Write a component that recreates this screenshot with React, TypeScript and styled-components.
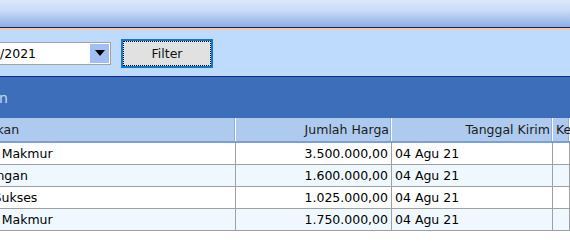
import React from 'react'
import styled, { createGlobalStyle } from 'styled-components'

// the window is scrolled to the right, so the page is drawn wider and shifted left
const SHIFT = 200
const COLUMNS = '131px 305px 156px 161px 1fr'

const GlobalStyle = createGlobalStyle`
  html, body {
    margin: 0;
    padding: 0;
    background: #fff;
  }
  body {
    font-family: "DejaVu Sans", Verdana, sans-serif;
    font-size: 12.5px;
    color: #000;
  }
`

const Viewport = styled.div`
  width: 570px;
  height: 246px;
  overflow: hidden;
  background: #fff;
`

const Page = styled.div`
  width: ${570 + SHIFT}px;
  margin-left: -${SHIFT}px;
`

const TopBar = styled.div`
  height: 27px;
  background: linear-gradient(#dce8fb 0%, #c8dbf7 40%, #8daee4 100%);
  border-bottom: 1px solid #0b2183;
`

const Toolbar = styled.div`
  height: 46px;
  display: flex;
  align-items: center;
  background: #bedbfe;
  border-top: 2px solid #fdca95;
  border-bottom: 1px solid #0b2d91;
`

const Label = styled.span`
  width: 150px;
  margin-right: 10px;
  text-align: right;
`

const Combo = styled.div`
  box-sizing: border-box;
  width: 151px;
  height: 23px;
  display: flex;
  align-items: center;
  background: #fff;
  border: 1px solid #a3a3a3;
  padding: 0 1px 0 3px;
`

const ComboText = styled.span`
  flex: 1;
  font-size: 12.5px;
`

const ComboArrow = styled.div`
  width: 19px;
  height: 19px;
  display: flex;
  align-items: center;
  justify-content: center;
  background: #a2bff4;
`

const FilterButton = styled.button`
  box-sizing: border-box;
  width: 92px;
  height: 29px;
  margin-left: 10px;
  background: #e1e1e1;
  border: 2px solid #0a78d7;
  outline: 1px dotted #000;
  outline-offset: -3px;
  font-family: inherit;
  font-size: 12.5px;
  color: #111;
  padding: 0;
`

const TitleBand = styled.div`
  height: 41px;
  display: flex;
  align-items: center;
  background: #3d6eb9;
`

const Title = styled.div`
  width: 208px;
  text-align: right;
  white-space: nowrap;
  color: #c7d8f1;
  font-size: 14px;
`

const Row = styled.div<{ $alt?: boolean }>`
  display: grid;
  grid-template-columns: ${COLUMNS};
  height: 22px;
  box-sizing: border-box;
  background: ${(p) => (p.$alt ? '#eff8fe' : '#fff')};
  border-bottom: 1px solid #a0a0a0;
`

const HeaderRow = styled.div`
  display: grid;
  grid-template-columns: ${COLUMNS};
  height: 25px;
  box-sizing: border-box;
  background: #aecbef;
  border-bottom: 2px solid #7c9fdc;
`

const HeaderCell = styled.div<{ $right?: boolean }>`
  padding: 0 3px;
  line-height: 23px;
  white-space: nowrap;
  overflow: hidden;
  text-align: ${(p) => (p.$right ? 'right' : 'left')};
  color: #1b1b1b;
  box-shadow: inset -1px 0 #fff, inset -2px 0 #93afdc;
`

const Cell = styled.div<{ $right?: boolean }>`
  padding: 0 3px;
  line-height: 21px;
  white-space: nowrap;
  overflow: hidden;
  text-align: ${(p) => (p.$right ? 'right' : 'left')};
  border-right: 1px solid #a0a0a0;
`

const rows = [
  { no: 1, name: 'Toko Sinar Makmur', harga: '3.500.000,00', tanggal: '04 Agu 21' },
  { no: 2, name: 'Toko Kenangan', harga: '1.600.000,00', tanggal: '04 Agu 21' },
  { no: 3, name: 'CV. Mitra Sukses', harga: '1.025.000,00', tanggal: '04 Agu 21' },
  { no: 4, name: 'Toko Bumi Makmur', harga: '1.750.000,00', tanggal: '04 Agu 21' },
]

export default function App() {
  return (
    <Viewport>
      <GlobalStyle />
      <Page>
        <TopBar />
        <Toolbar>
          <Label>Tanggal Kirim</Label>
          <Combo>
            <ComboText>04/08/2021</ComboText>
            <ComboArrow>
              <svg width="10" height="6" viewBox="0 0 10 6">
                <path d="M0 0h10L5 6z" fill="#000" />
              </svg>
            </ComboArrow>
          </Combo>
          <FilterButton>Filter</FilterButton>
        </Toolbar>
        <TitleBand>
          <Title>Laporan Pengiriman</Title>
        </TitleBand>
        <HeaderRow>
          <HeaderCell>No</HeaderCell>
          <HeaderCell>Diperuntukan</HeaderCell>
          <HeaderCell $right>Jumlah Harga</HeaderCell>
          <HeaderCell $right>Tanggal Kirim</HeaderCell>
          <HeaderCell>Keterangan</HeaderCell>
        </HeaderRow>
        {rows.map((r, i) => (
          <Row key={r.no} $alt={i % 2 === 1}>
            <Cell>{r.no}</Cell>
            <Cell>{r.name}</Cell>
            <Cell $right>{r.harga}</Cell>
            <Cell>{r.tanggal}</Cell>
            <Cell />
          </Row>
        ))}
      </Page>
    </Viewport>
  )
}
